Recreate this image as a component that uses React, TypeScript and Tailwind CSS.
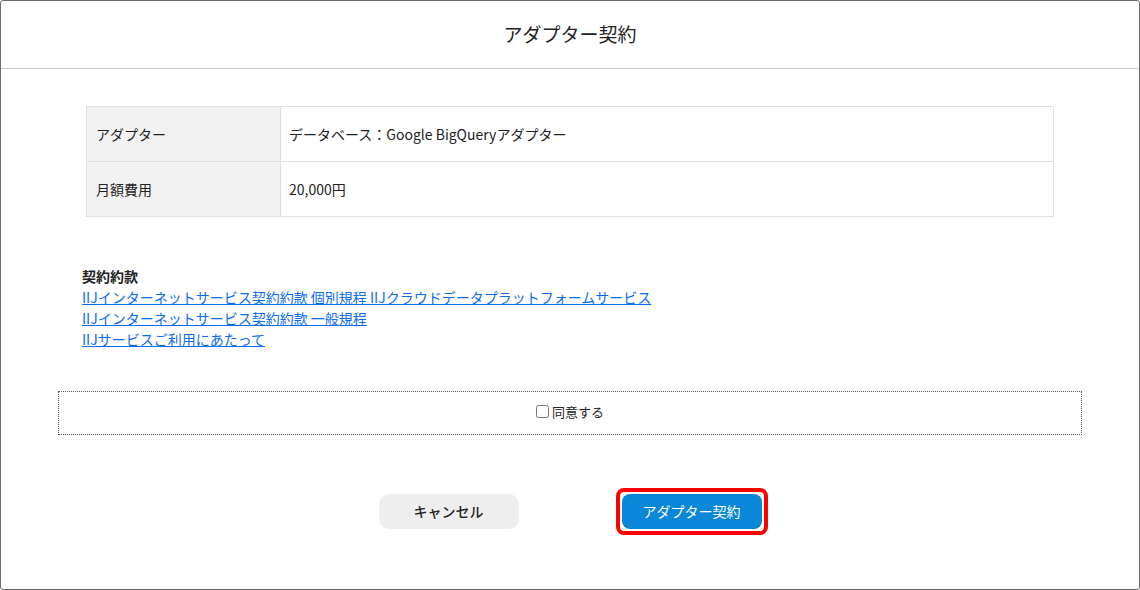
import { useState } from 'react'

const font = { fontFamily: '"Noto Sans CJK JP", "Noto Sans", sans-serif' }

const rows = [
  { label: 'アダプター', value: 'データベース：Google BigQueryアダプター' },
  { label: '月額費用', value: '20,000円' },
]

const terms = [
  'IIJインターネットサービス契約約款 個別規程 IIJクラウドデータプラットフォームサービス',
  'IIJインターネットサービス契約約款 一般規程',
  'IIJサービスご利用にあたって',
]

export default function App() {
  const [agreed, setAgreed] = useState(false)

  return (
    <div
      style={font}
      className="flex h-[590px] w-[1140px] flex-col overflow-hidden rounded-[3px] border border-[#6b6b6b] bg-white text-[#222]"
    >
      <header className="flex h-[68px] shrink-0 items-center justify-center border-b border-[#c8c8c8]">
        <h1 className="text-[19px] font-normal text-[#222]">アダプター契約</h1>
      </header>

      <div className="flex flex-col px-[85px] pt-[37px]">
        <table className="w-full border-collapse text-[14px]">
          <tbody>
            {rows.map((r) => (
              <tr key={r.label} className="h-[55px]">
                <th className="w-[194px] border border-[#e0e0e0] bg-[#f2f2f2] pl-[9px] text-left font-normal">
                  {r.label}
                </th>
                <td className="border border-[#e0e0e0] pl-[8px]">{r.value}</td>
              </tr>
            ))}
          </tbody>
        </table>
      </div>

      <div className="mt-[49px] flex flex-col pl-[81px] text-[14px] leading-[21px]">
        <p className="font-bold">契約約款</p>
        {terms.map((t) => (
          <a key={t} href="#" className="w-fit text-[#0a6cf0] underline">
            {t}
          </a>
        ))}
      </div>

      <div className="mx-[57px] mt-[41px] flex h-[44px] items-center justify-center border border-dotted border-[#555]">
        <label className="-mt-[3px] flex items-center gap-[3px] text-[13px] text-[#222]">
          <input
            type="checkbox"
            checked={agreed}
            onChange={(e) => setAgreed(e.target.checked)}
            className="h-[13px] w-[13px]"
          />
          同意する
        </label>
      </div>

      <div className="mt-[53px] flex items-center justify-center gap-[97px] pl-[6px]">
        <button className="h-[35px] w-[140px] rounded-[10px] bg-[#eeeeee] text-[14px] font-medium text-[#222]">
          キャンセル
        </button>
        <div className="rounded-[8px] border-[4px] border-[#ff0000] p-[2px]">
          <button className="block h-[35px] w-[140px] rounded-[8px] bg-[#0a87d6] text-[14px] text-white">
            アダプター契約
          </button>
        </div>
      </div>
    </div>
  )
}
